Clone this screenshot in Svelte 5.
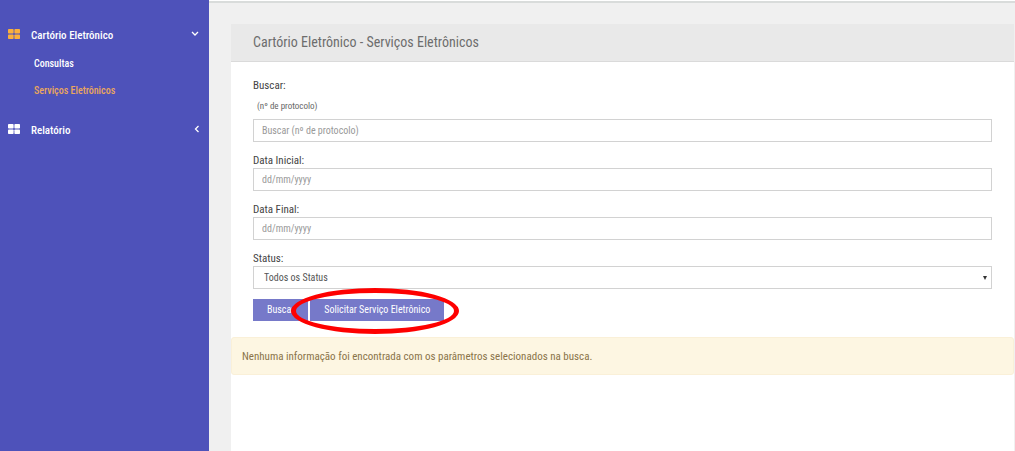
<script lang="ts">
  let menuOpen = true;
  let reportOpen = false;
  let protocol = '';
  let startDate = '';
  let endDate = '';
  let status = 'todos';
</script>

<div class="layout">
  <nav class="sidebar">
    <button class="menu-item" type="button" aria-expanded={menuOpen} on:click={() => (menuOpen = !menuOpen)}>
      <svg class="grid-icon active" width="12" height="10" viewBox="0 0 12 10" fill="currentColor">
        <rect x="0" y="0" width="5.6" height="4.6" rx="0.8"></rect>
        <rect x="6.4" y="0" width="5.6" height="4.6" rx="0.8"></rect>
        <rect x="0" y="5.4" width="5.6" height="4.6" rx="0.8"></rect>
        <rect x="6.4" y="5.4" width="5.6" height="4.6" rx="0.8"></rect>
      </svg>
      <span class="menu-label">Cartório Eletrônico</span>
      <svg class="arrow" width="8" height="8" viewBox="0 0 8 8" fill="none" stroke="currentColor" stroke-width="1.3">
        <path d="M1 2l3 3 3-3"></path>
      </svg>
    </button>
    {#if menuOpen}
      <ul class="submenu">
        <li><a href="#consultas">Consultas</a></li>
        <li><a class="current" href="#servicos">Serviços Eletrônicos</a></li>
      </ul>
    {/if}
    <button class="menu-item" type="button" aria-expanded={reportOpen} on:click={() => (reportOpen = !reportOpen)}>
      <svg class="grid-icon" width="12" height="10" viewBox="0 0 12 10" fill="currentColor">
        <rect x="0" y="0" width="5.6" height="4.6" rx="0.8"></rect>
        <rect x="6.4" y="0" width="5.6" height="4.6" rx="0.8"></rect>
        <rect x="0" y="5.4" width="5.6" height="4.6" rx="0.8"></rect>
        <rect x="6.4" y="5.4" width="5.6" height="4.6" rx="0.8"></rect>
      </svg>
      <span class="menu-label">Relatório</span>
      <svg class="arrow" width="8" height="8" viewBox="0 0 8 8" fill="none" stroke="currentColor" stroke-width="1.3">
        <path d="M7.500 1l-3 3 3 3"></path>
      </svg>
    </button>
  </nav>

  <div class="content">
    <div class="topbar"></div>
    <main class="panel">
      <h1 class="panel-title">Cartório Eletrônico - Serviços Eletrônicos</h1>

      <form class="panel-body" on:submit|preventDefault>
        <div class="field">
          <label for="protocol">Buscar:</label>
          <small class="hint">(nº de protocolo)</small>
          <input id="protocol" type="text" placeholder="Buscar (nº de protocolo)" bind:value={protocol} />
        </div>
        <div class="field">
          <label for="start">Data Inicial:</label>
          <input id="start" type="text" placeholder="dd/mm/yyyy" bind:value={startDate} />
        </div>
        <div class="field">
          <label for="end">Data Final:</label>
          <input id="end" type="text" placeholder="dd/mm/yyyy" bind:value={endDate} />
        </div>
        <div class="field">
          <label for="status">Status:</label>
          <div class="select-wrap">
            <select id="status" bind:value={status}>
              <option value="todos">Todos os Status</option>
            </select>
            <svg class="caret" width="4" height="4" viewBox="0 0 4 4" fill="currentColor">
              <path d="M0 0h4L2 4z"></path>
            </svg>
          </div>
        </div>
        <div class="actions">
          <button class="btn" type="submit">Buscar</button>
          <div class="highlighted">
            <button class="btn" type="button">Solicitar Serviço Eletrônico</button>
            <span class="ring"></span>
          </div>
        </div>
      </form>

      <div class="alert" role="status">Nenhuma informação foi encontrada com os parâmetros selecionados na busca.</div>
    </main>
  </div>
</div>

<style>
  :global(body) {
    margin: 0;
    background: #f0f0f0;
  }

  .layout {
    display: flex;
    min-height: 100vh;
    font-family: 'Roboto Condensed', 'Liberation Sans Narrow', Roboto, sans-serif;
    font-size: 11px;
    line-height: 16px;
    color: #444;
  }

  button,
  input,
  select {
    box-sizing: border-box;
    margin: 0;
    font: inherit;
  }

  .sidebar {
    box-sizing: border-box;
    flex: 0 0 209px;
    padding-top: 24px;
    background: #4e52ba;
    color: #fff;
  }

  .menu-item {
    display: flex;
    align-items: center;
    width: 100%;
    height: 24px;
    padding: 0 10px 0 8px;
    border: none;
    background: none;
    color: inherit;
    font-weight: 500;
    text-align: left;
    cursor: pointer;
  }

  .grid-icon {
    margin: 0 11px 4px 0;
  }

  .grid-icon.active {
    color: #fbb03b;
  }

  .menu-label {
    flex: 1;
  }

  .arrow {
    margin-bottom: 4px;
  }

  .submenu {
    margin: 0 0 15px;
    padding: 2px 0 0 34px;
    list-style: none;
  }

  .submenu a {
    display: block;
    height: 27px;
    line-height: 27px;
    color: #fff;
    font-size: 10px;
    font-weight: 500;
    text-decoration: none;
  }

  .submenu a.current {
    color: #eba75c;
  }

  .content {
    display: flex;
    flex: 1;
    flex-direction: column;
    min-width: 0;
  }

  .topbar {
    height: 1px;
    background: #fff;
    border-bottom: 2px solid #d9dcdb;
  }

  .panel {
    flex: 1;
    margin: 21px 1px 0 22px;
    background: #fff;
  }

  .panel-title {
    margin: 0;
    padding: 0 22px;
    background: #e9e9e9;
    border-bottom: 1px solid #dadada;
    color: #6d6d6d;
    font-size: 14px;
    font-weight: 400;
    line-height: 37px;
  }

  .panel-body {
    padding: 17px 22px 16px;
  }

  .field {
    display: flex;
    flex-direction: column;
    margin-bottom: 12px;
  }

  .field:nth-last-child(2) {
    margin-bottom: 10px;
  }

  label {
    line-height: 14px;
  }

  .hint {
    margin: 5px 0 5px 4px;
    color: #666;
    font-size: 9px;
  }

  input,
  select {
    width: 100%;
    height: 23px;
    padding: 0 8px;
    border: 1px solid #d2d2d2;
    border-radius: 0;
    background: #fff;
    color: #555;
    font-size: 10px;
  }

  input::placeholder {
    color: #999;
  }

  .select-wrap {
    position: relative;
    display: flex;
  }

  select {
    padding: 0 10px;
    appearance: none;
  }

  .caret {
    position: absolute;
    top: 10px;
    right: 5px;
    color: #333;
    pointer-events: none;
  }

  .actions {
    display: flex;
    gap: 2px;
  }

  .btn {
    height: 22px;
    padding: 0 14px;
    border: none;
    background: #7679c9;
    color: #fff;
    font-size: 10px;
    cursor: pointer;
  }

  .highlighted {
    position: relative;
    display: flex;
  }

  .ring {
    position: absolute;
    inset: -11px -15px -13px -19px;
    border: 5px solid #fe0000;
    border-radius: 50%;
    pointer-events: none;
  }

  .alert {
    padding: 11px 10px 9px;
    border: 1px solid #faf0d8;
    border-radius: 3px;
    background: #fdf6e2;
    color: #8a7449;
  }
</style>
